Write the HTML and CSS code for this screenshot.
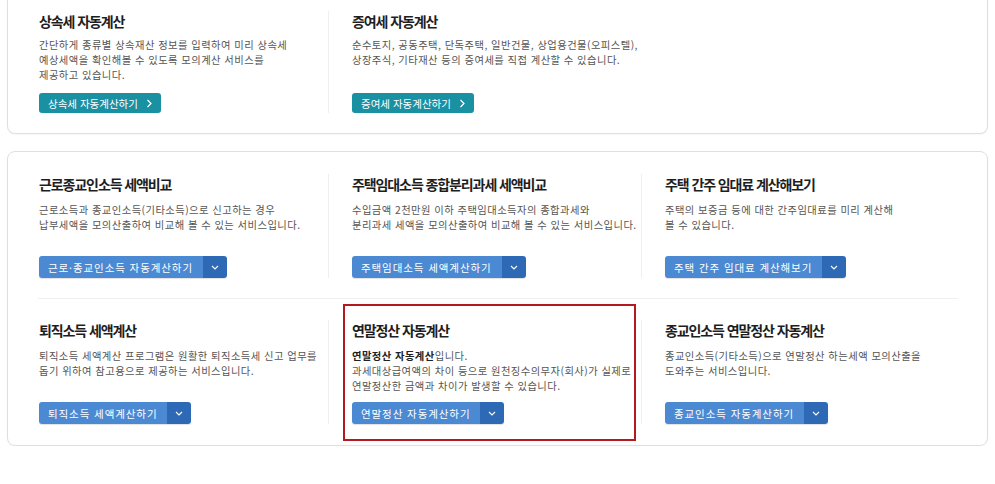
FILE: index.html
```html
<!DOCTYPE html>
<html lang="ko">
<head>
    <meta charset="UTF-8">
    <meta name="viewport" content="width=device-width, initial-scale=1.0">
    <title>자동계산 서비스</title>
    <link rel="stylesheet" href="styles.css">
</head>
<body>

<div class="page">
    <!-- 상속 / 증여 -->
    <section class="card card-top">
        <div class="calc-grid">
            <div class="calc-item">
                <h3 class="calc-title">상속세 자동계산</h3>
                <p class="calc-desc">간단하게 종류별 상속재산 정보를 입력하여 미리 상속세<br>예상세액을 확인해볼 수 있도록 모의계산 서비스를<br>제공하고 있습니다.</p>
                <a href="#" class="btn-teal">상속세 자동계산하기
                    <svg width="7" height="9" viewBox="0 0 7 9"><path d="M1.5 1l3.5 3.5L1.5 8" fill="none" stroke="#fff" stroke-width="1.2"/></svg>
                </a>
            </div>
            <div class="calc-item">
                <h3 class="calc-title">증여세 자동계산</h3>
                <p class="calc-desc">순수토지, 공동주택, 단독주택, 일반건물, 상업용건물(오피스텔),<br>상장주식, 기타재산 등의 증여세를 직접 계산할 수 있습니다.</p>
                <a href="#" class="btn-teal">증여세 자동계산하기
                    <svg width="7" height="9" viewBox="0 0 7 9"><path d="M1.5 1l3.5 3.5L1.5 8" fill="none" stroke="#fff" stroke-width="1.2"/></svg>
                </a>
            </div>
            <div class="calc-item empty"></div>
        </div>
    </section>

    <!-- 소득 관련 -->
    <section class="card">
        <div class="calc-grid">
            <div class="calc-item">
                <h3 class="calc-title">근로종교인소득 세액비교</h3>
                <p class="calc-desc">근로소득과 종교인소득(기타소득)으로 신고하는 경우<br>납부세액을 모의산출하여 비교해 볼 수 있는 서비스입니다.</p>
                <div class="btn-split">
                    <a href="#" class="btn-main">근로·종교인소득 자동계산하기</a>
                    <button class="btn-drop"><svg width="8" height="5" viewBox="0 0 8 5"><path d="M1 1l3 3 3-3" fill="none" stroke="#fff" stroke-width="1.1"/></svg></button>
                </div>
            </div>
            <div class="calc-item">
                <h3 class="calc-title">주택임대소득 종합분리과세 세액비교</h3>
                <p class="calc-desc">수입금액 2천만원 이하 주택임대소득자의 종합과세와<br>분리과세 세액을 모의산출하여 비교해 볼 수 있는 서비스입니다.</p>
                <div class="btn-split">
                    <a href="#" class="btn-main">주택임대소득 세액계산하기</a>
                    <button class="btn-drop"><svg width="8" height="5" viewBox="0 0 8 5"><path d="M1 1l3 3 3-3" fill="none" stroke="#fff" stroke-width="1.1"/></svg></button>
                </div>
            </div>
            <div class="calc-item">
                <h3 class="calc-title">주택 간주 임대료 계산해보기</h3>
                <p class="calc-desc">주택의 보증금 등에 대한 간주임대료를 미리 계산해<br>볼 수 있습니다.</p>
                <div class="btn-split">
                    <a href="#" class="btn-main">주택 간주 임대료 계산해보기</a>
                    <button class="btn-drop"><svg width="8" height="5" viewBox="0 0 8 5"><path d="M1 1l3 3 3-3" fill="none" stroke="#fff" stroke-width="1.1"/></svg></button>
                </div>
            </div>
        </div>

        <div class="calc-line"></div>

        <div class="calc-grid">
            <div class="calc-item">
                <h3 class="calc-title">퇴직소득 세액계산</h3>
                <p class="calc-desc">퇴직소득 세액계산 프로그램은 원활한 퇴직소득세 신고 업무를<br>돕기 위하여 참고용으로 제공하는 서비스입니다.</p>
                <div class="btn-split">
                    <a href="#" class="btn-main">퇴직소득 세액계산하기</a>
                    <button class="btn-drop"><svg width="8" height="5" viewBox="0 0 8 5"><path d="M1 1l3 3 3-3" fill="none" stroke="#fff" stroke-width="1.1"/></svg></button>
                </div>
            </div>
            <div class="calc-item">
                <span class="highlight"></span>
                <h3 class="calc-title">연말정산 자동계산</h3>
                <p class="calc-desc"><strong>연말정산 자동계산</strong>입니다.<br>과세대상급여액의 차이 등으로 원천징수의무자(회사)가 실제로<br>연말정산한 금액과 차이가 발생할 수 있습니다.</p>
                <div class="btn-split">
                    <a href="#" class="btn-main">연말정산 자동계산하기</a>
                    <button class="btn-drop"><svg width="8" height="5" viewBox="0 0 8 5"><path d="M1 1l3 3 3-3" fill="none" stroke="#fff" stroke-width="1.1"/></svg></button>
                </div>
            </div>
            <div class="calc-item">
                <h3 class="calc-title">종교인소득 연말정산 자동계산</h3>
                <p class="calc-desc">종교인소득(기타소득)으로 연말정산 하는세액 모의산출을<br>도와주는 서비스입니다.</p>
                <div class="btn-split">
                    <a href="#" class="btn-main">종교인소득 자동계산하기</a>
                    <button class="btn-drop"><svg width="8" height="5" viewBox="0 0 8 5"><path d="M1 1l3 3 3-3" fill="none" stroke="#fff" stroke-width="1.1"/></svg></button>
                </div>
            </div>
        </div>
    </section>
</div>

</body>
</html>
```

FILE: styles.css
```css
body {
    font-family: "Noto Sans CJK KR", "Noto Sans", sans-serif;
    margin: 0;
    padding: 0;
    background-color: #fff;
    color: #222;
}
.page {
    padding: 0 7px;
}
.card {
    border: 1px solid #dcdfe3;
    border-radius: 8px;
    padding: 22px 33px 21px 7px;
    margin-top: 17px;
    box-shadow: 0 1px 2px rgba(0, 0, 0, 0.04);
}
.card-top {
    border-top: 0;
    border-radius: 0 0 8px 8px;
    margin-top: 0;
    padding-top: 11px;
    padding-bottom: 20px;
}
.card-top .calc-desc {
    margin-top: 6px;
}
.card-top .btn-teal {
    margin-top: 11px;
}
.calc-grid {
    display: grid;
    grid-template-columns: repeat(3, 1fr);
}
.calc-item {
    position: relative;
    display: flex;
    flex-direction: column;
    align-items: flex-start;
    padding-left: 23px;
    border-left: 1px solid #eeeff1;
}
.calc-item:first-child {
    border-left-color: transparent;
}
.calc-item.empty {
    border-left-color: transparent;
}
.calc-title {
    margin: 0;
    font-size: 14px;
    line-height: 20px;
    font-weight: 700;
    letter-spacing: -1.1px;
    color: #1e1e1e;
}
.calc-desc {
    margin: 8px 0 0;
    min-height: 45px;
    font-size: 10.3px;
    line-height: 15px;
    color: #555;
    letter-spacing: 0.45px;
}
.calc-desc strong {
    color: #222;
}
.calc-line {
    height: 1px;
    background-color: #eeeff1;
    margin: 20px -4px 21px 23px;
}
.btn-teal {
    display: inline-flex;
    align-items: center;
    gap: 8px;
    height: 20px;
    padding: 0 8px 0 9px;
    border-radius: 3px;
    background-color: #1a90a3;
    color: #fff;
    font-size: 10.5px;
    text-decoration: none;
}
.btn-split {
    display: inline-flex;
    height: 22px;
    margin-top: 9px;
    border-radius: 3px;
    overflow: hidden;
    box-shadow: 0 1px 1px rgba(0, 0, 0, 0.12);
}
.btn-main {
    display: flex;
    align-items: center;
    padding: 0 10px 0 9px;
    background-color: #4b89d3;
    color: #fff;
    font-size: 10.5px;
    letter-spacing: 0.9px;
    text-decoration: none;
}
.btn-drop {
    width: 24px;
    border: 0;
    padding: 0;
    display: flex;
    align-items: center;
    justify-content: center;
    background-color: #2e69b6;
    cursor: pointer;
}
.highlight {
    position: absolute;
    top: -16px;
    bottom: -17px;
    left: 14px;
    right: 5px;
    border: 2px solid #b3191f;
    pointer-events: none;
}
```
